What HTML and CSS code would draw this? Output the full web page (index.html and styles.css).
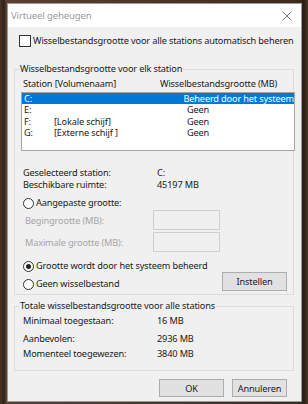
FILE: index.html
```html
<!DOCTYPE html>
<html lang="nl">
<head>
  <meta charset="UTF-8" />
  <title>Virtueel geheugen</title>
  <link rel="stylesheet" href="styles.css">
</head>
<body>

<div class="window">
  <div class="titlebar">
    <span class="title">Virtueel geheugen</span>
    <svg class="close" width="10" height="10" viewBox="0 0 10 10">
      <path d="M0.5 0.5 L9.5 9.5 M9.5 0.5 L0.5 9.5" stroke="#777" stroke-width="1" fill="none"/>
    </svg>
  </div>

  <div class="content">
    <label class="auto-row">
      <span class="checkbox"></span>
      <span>Wisselbestandsgrootte voor alle stations automatisch beheren</span>
    </label>

    <fieldset class="group group-stations">
      <legend>Wisselbestandsgrootte voor elk station</legend>

      <div class="list-head">
        <span class="col-station">Station [Volumenaam]</span>
        <span>Wisselbestandsgrootte (MB)</span>
      </div>

      <div class="listbox">
        <div class="list-row selected">
          <span class="col-drive">C:</span><span class="col-name"></span><span>Beheerd door het systeem</span>
        </div>
        <div class="list-row">
          <span class="col-drive">E:</span><span class="col-name"></span><span>Geen</span>
        </div>
        <div class="list-row">
          <span class="col-drive">F:</span><span class="col-name">[Lokale schijf]</span><span>Geen</span>
        </div>
        <div class="list-row">
          <span class="col-drive">G:</span><span class="col-name">[Externe schijf ]</span><span>Geen</span>
        </div>
      </div>

      <div class="info">
        <div class="info-row"><span class="info-label">Geselecteerd station:</span><span>C:</span></div>
        <div class="info-row"><span class="info-label">Beschikbare ruimte:</span><span>45197 MB</span></div>
      </div>

      <label class="radio-row custom">
        <span class="radio"></span>
        <span>Aangepaste grootte:</span>
      </label>

      <div class="size-row first">
        <span class="size-label">Begingrootte (MB):</span>
        <span class="size-input"></span>
      </div>
      <div class="size-row">
        <span class="size-label">Maximale grootte (MB):</span>
        <span class="size-input"></span>
      </div>

      <div class="choice-row">
        <div class="choices">
          <label class="radio-row">
            <span class="radio checked"></span>
            <span>Grootte wordt door het systeem beheerd</span>
          </label>
          <label class="radio-row">
            <span class="radio"></span>
            <span>Geen wisselbestand</span>
          </label>
        </div>
        <button class="btn btn-set">Instellen</button>
      </div>
    </fieldset>

    <fieldset class="group group-total">
      <legend>Totale wisselbestandsgrootte voor alle stations</legend>
      <div class="info-row"><span class="info-label">Minimaal toegestaan:</span><span>16 MB</span></div>
      <div class="info-row gap-large"><span class="info-label">Aanbevolen:</span><span>2936 MB</span></div>
      <div class="info-row gap-small"><span class="info-label">Momenteel toegewezen:</span><span>3840 MB</span></div>
    </fieldset>

    <div class="buttons">
      <button class="btn btn-ok">OK</button>
      <button class="btn btn-cancel">Annuleren</button>
    </div>
  </div>
</div>

</body>
</html>
```

FILE: styles.css
```css
body {
  margin: 0;
  height: 404px;
  overflow: hidden;
  font-family: "Noto Sans", "Open Sans", sans-serif;
  font-size: 9.2px;
  letter-spacing: -0.15px;
  white-space: nowrap;
  color: #1a1a1a;
  background-color: #3b2a1f;
  background-image: linear-gradient(90deg, #4a3526 0px, #2f2119 4px, #5a4030 6px, #3e2b1f 300px, #2a1d15 304px, #4b3727 308px);
}

.window {
  margin: 3px 0 0 7px;
  width: 293px;
  height: 397px;
  background-color: #f0f0f0;
  border: 1px solid #9a9a9a;
  display: flex;
  flex-direction: column;
}

.titlebar {
  height: 23px;
  background-color: white;
  display: flex;
  align-items: center;
  justify-content: space-between;
  padding: 0 9px 0 3px;
}

.title {
  color: #9a9a9a;
  font-size: 9.6px;
}

.content {
  padding: 0 7px 0 6px;
  display: flex;
  flex-direction: column;
}

.auto-row {
  display: flex;
  align-items: center;
  height: 13px;
  margin-top: 7px;
  padding-left: 5px;
  gap: 2px;
  line-height: 12px;
}

.checkbox {
  width: 10px;
  height: 10px;
  border: 1px solid #333;
  background-color: white;
}

.group {
  margin: 0;
  border: 1px solid #dcdcdc;
  padding: 0 0 0 6px;
  min-width: 0;
}

.group legend {
  padding: 0 1px;
  margin-left: -2px;
  line-height: 12px;
}

.group-stations {
  margin-top: 16px;
  padding-bottom: 4px;
}

.list-head {
  display: flex;
  line-height: 12px;
  padding: 3px 0 0 2px;
}

.col-station {
  width: 137px;
}

.listbox {
  margin: 2px -2px 0 0;
  height: 57px;
  background-color: white;
  border: 1px solid #a5a5a5;
}

.list-row {
  display: flex;
  height: 11.4px;
  line-height: 11.4px;
  padding-left: 2px;
}

.list-row.selected {
  background-color: #0078d7;
  color: white;
}

.col-drive {
  width: 30px;
}

.col-name {
  width: 133px;
}

.info {
  margin-top: 16px;
}

.info-row {
  display: flex;
  line-height: 12px;
  padding-left: 2px;
}

.info-label {
  width: 134px;
}

.radio-row {
  display: flex;
  align-items: center;
  gap: 2px;
  line-height: 12px;
  padding-left: 2px;
}

.radio-row.custom {
  margin-top: 6px;
}

.radio {
  width: 9px;
  height: 9px;
  border: 1px solid #333;
  border-radius: 50%;
  background-color: white;
  display: flex;
  align-items: center;
  justify-content: center;
}

.radio.checked::after {
  content: "";
  width: 5px;
  height: 5px;
  border-radius: 50%;
  background-color: #222;
}

.size-row {
  display: flex;
  align-items: center;
  height: 20px;
  margin-top: 2px;
  padding-left: 4px;
  color: #a5a5a5;
}

.size-row.first {
  margin-top: 1px;
}

.size-label {
  width: 128px;
}

.size-input {
  width: 65px;
  height: 18px;
  border: 1px solid #cfcfcf;
  background-color: #f0f0f0;
}

.choice-row {
  display: flex;
  justify-content: space-between;
  align-items: flex-end;
  margin-top: 8px;
  padding-right: 6px;
}

.choices {
  display: flex;
  flex-direction: column;
  gap: 6px;
}

.btn {
  font-family: inherit;
  font-size: 9.2px;
  letter-spacing: -0.15px;
  color: #1a1a1a;
  background-color: #e1e1e1;
  border: 1px solid #adadad;
  padding: 0;
  height: 19px;
}

.btn-set {
  width: 65px;
  margin-bottom: -1px;
}

.group-total {
  margin-top: 5px;
  padding-bottom: 10px;
}

.group-total .info-row:first-of-type {
  margin-top: 3px;
}

.info-row.gap-large {
  margin-top: 6px;
}

.info-row.gap-small {
  margin-top: 3px;
}

.buttons {
  display: flex;
  justify-content: flex-end;
  gap: 8px;
  margin-top: 8px;
  padding-right: 7px;
}

.btn-ok {
  width: 65px;
  height: 18px;
}

.btn-cancel {
  width: 55px;
  height: 18px;
}
```
